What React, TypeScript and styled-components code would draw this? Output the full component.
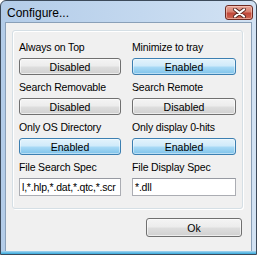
import styled, { createGlobalStyle, css } from 'styled-components'

const GlobalStyle = createGlobalStyle`
  html, body {
    margin: 0;
    padding: 0;
    background: #ffffff;
  }
`

const Window = styled.div`
  width: 257px;
  height: 255px;
  box-sizing: border-box;
  border: 1px solid #3c4a5a;
  border-radius: 6px 6px 0 0;
  background: linear-gradient(90deg, #b3cce8 0%, #c3d8ef 55%, #d2e2f3 100%);
  display: flex;
  flex-direction: column;
  overflow: hidden;
  font-family: 'Liberation Sans', Arial, sans-serif;
`

const TitleBar = styled.div`
  height: 21px;
  flex: none;
  display: flex;
  align-items: flex-start;
  justify-content: space-between;
  padding: 0 3px 0 6px;
`

const Title = styled.span`
  font-size: 12px;
  line-height: 13px;
  margin-top: 6px;
  color: #000;
`

const CloseButton = styled.div`
  margin-top: 4px;
  width: 28px;
  height: 15px;
  box-sizing: border-box;
  border: 1px solid #6e2a22;
  border-radius: 3px;
  background: linear-gradient(180deg, #e8a597 0%, #d6806f 45%, #c0473a 55%, #cf6753 100%);
  box-shadow: inset 0 0 0 1px rgba(255, 220, 210, 0.5);
  display: flex;
  align-items: center;
  justify-content: center;
`

const Client = styled.div`
  flex: 1;
  margin: 0 4px 0 4px;
  background: #f0f0f0;
  border: 1px solid #8aa0b8;
  border-bottom: none;
  padding: 7px 8px 0 6px;
  display: flex;
  flex-direction: column;
`

const BottomFrame = styled.div`
  height: 3px;
  flex: none;
  background: linear-gradient(180deg, #a8d4ee 0%, #34a9dc 100%);
`

const GroupBox = styled.div`
  box-sizing: border-box;
  height: 179px;
  border: 1px solid #d5dfe5;
  border-radius: 3px;
  box-shadow: inset 1px 1px 0 #ffffff, 1px 1px 0 #ffffff;
  padding: 10px 7px 0 6px;
  display: grid;
  grid-template-columns: 102px 104px;
  column-gap: 11px;
  row-gap: 6px;
  align-content: start;
`

const Field = styled.div`
  display: flex;
  flex-direction: column;
`

const Label = styled.span`
  font-size: 10.5px;
  letter-spacing: -0.15px;
  line-height: 13px;
  height: 13px;
  margin-bottom: 4px;
  color: #000;
  white-space: nowrap;
`

const buttonBase = css`
  box-sizing: border-box;
  border-radius: 3px;
  font-family: 'Liberation Sans', Arial, sans-serif;
  font-size: 10.5px;
  color: #000;
  display: flex;
  align-items: center;
  justify-content: center;
`

const ToggleButton = styled.div<{ $on: boolean }>`
  ${buttonBase}
  height: 17px;
  ${({ $on }) =>
    $on
      ? css`
          border: 1px solid #3c7fb1;
          background: linear-gradient(180deg, #e3f3fc 0%, #cfeafa 48%, #a9daf6 52%, #7fc3ea 100%);
          box-shadow: inset 0 0 0 1px rgba(255, 255, 255, 0.45);
        `
      : css`
          border: 1px solid #707070;
          background: linear-gradient(180deg, #f4f4f4 0%, #ececec 48%, #dedede 52%, #d0d0d0 100%);
          box-shadow: inset 0 0 0 1px rgba(255, 255, 255, 0.6);
        `}
`

const TextBox = styled.div`
  box-sizing: border-box;
  height: 18px;
  border: 1px solid #abadb3;
  border-top-color: #979aa2;
  background: #fff;
  padding: 0 2px;
  display: flex;
  align-items: center;
  font-size: 10.5px;
  letter-spacing: -0.2px;
  white-space: nowrap;
  color: #000;
`

const Footer = styled.div`
  display: flex;
  justify-content: flex-end;
  padding: 9px 1px 0 0;
`

const OkButton = styled.div`
  ${buttonBase}
  width: 96px;
  height: 19px;
  border: 1px solid #707070;
  background: linear-gradient(180deg, #f4f4f4 0%, #ececec 48%, #dedede 52%, #d0d0d0 100%);
  box-shadow: inset 0 0 0 1px rgba(255, 255, 255, 0.6);
`

const toggles = [
  { label: 'Always on Top', on: false },
  { label: 'Minimize to tray', on: true },
  { label: 'Search Removable', on: false },
  { label: 'Search Remote', on: false },
  { label: 'Only OS Directory', on: true },
  { label: 'Only display 0-hits', on: true }
]

const CloseIcon = () => (
  <svg width="15" height="10" viewBox="0 0 15 10">
    <path d="M3 1.5 L12 8.5 M12 1.5 L3 8.5" stroke="#5a2a24" strokeWidth="4" strokeLinecap="round" />
    <path d="M3 1.5 L12 8.5 M12 1.5 L3 8.5" stroke="#ffffff" strokeWidth="2.2" strokeLinecap="round" />
  </svg>
)

export default function App() {
  return (
    <>
      <GlobalStyle />
      <Window>
        <TitleBar>
          <Title>Configure...</Title>
          <CloseButton>
            <CloseIcon />
          </CloseButton>
        </TitleBar>
        <Client>
          <GroupBox>
            {toggles.map((t) => (
              <Field key={t.label}>
                <Label>{t.label}</Label>
                <ToggleButton $on={t.on}>{t.on ? 'Enabled' : 'Disabled'}</ToggleButton>
              </Field>
            ))}
            <Field>
              <Label>File Search Spec</Label>
              <TextBox>l,*.hlp,*.dat,*.qtc,*.scr</TextBox>
            </Field>
            <Field>
              <Label>File Display Spec</Label>
              <TextBox>*.dll</TextBox>
            </Field>
          </GroupBox>
          <Footer>
            <OkButton>Ok</OkButton>
          </Footer>
        </Client>
        <BottomFrame />
      </Window>
    </>
  )
}
